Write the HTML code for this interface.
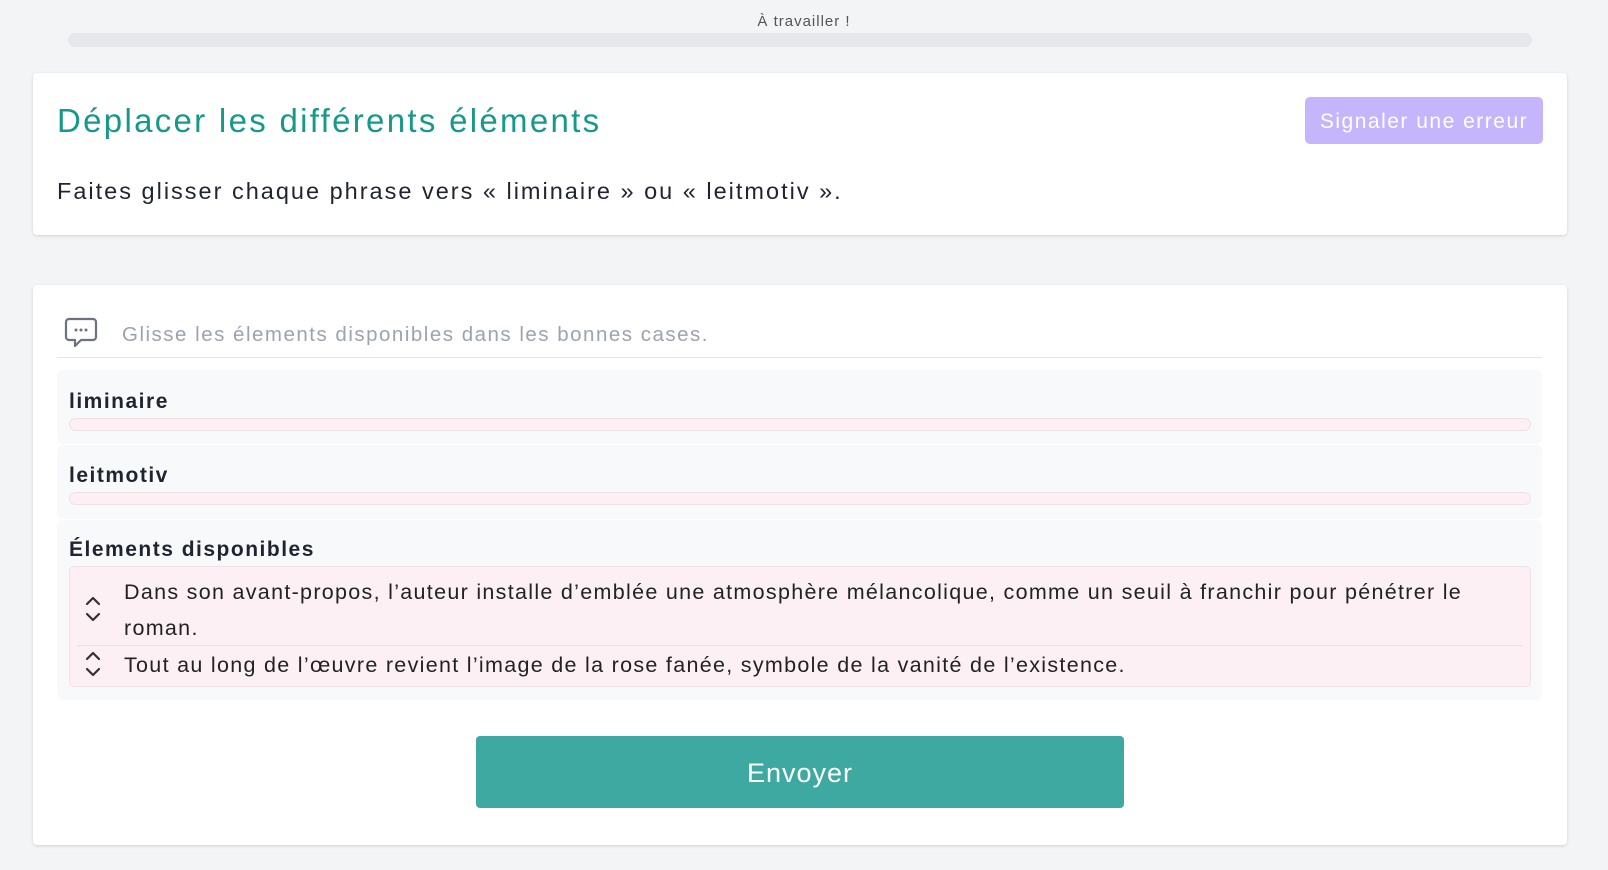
<!DOCTYPE html>
<html><head><meta charset="utf-8"><style>
*{box-sizing:border-box;margin:0;padding:0}
body{width:1608px;height:870px;background:#f3f4f6;font-family:"Liberation Sans",sans-serif;color:#1f2430;position:relative;overflow:hidden}
.a{position:absolute}
.card{background:#fff;border-radius:4px;box-shadow:0 1px 3px rgba(0,0,0,.15)}
.lbl{font-weight:bold;font-size:21px;left:69px;letter-spacing:1.5px}
.bar{left:69px;width:1462px;height:13px;background:#fdf0f5;border:1px solid #f2dfe6;border-radius:7px}
.zone{left:57px;width:1485px;background:#f8f9fa;border-radius:6px}
.txt{font-size:21.5px;color:#222;letter-spacing:1.3px}
</style></head><body>
<div class="a" style="left:0;width:1608px;top:13px;text-align:center;font-size:15px;color:#555;letter-spacing:1px">À travailler !</div>
<div class="a" style="left:68px;top:33px;width:1464px;height:14px;background:#e5e7eb;border-radius:7px"></div>

<div class="a card" style="left:33px;top:73px;width:1534px;height:162px"></div>
<div class="a" style="left:57px;top:102px;font-size:33px;color:#16998a;letter-spacing:2.3px">Déplacer les différents éléments</div>
<div class="a" style="left:1305px;top:97px;width:238px;height:47px;background:#c4b5fd;border-radius:5px;color:#fff;font-size:21px;line-height:49px;text-align:center;letter-spacing:1.5px">Signaler une erreur</div>
<div class="a" style="left:57px;top:178px;font-size:23.5px;color:#1f2430;letter-spacing:2px">Faites glisser chaque phrase vers « liminaire » ou « leitmotiv ».</div>

<div class="a card" style="left:33px;top:285px;width:1534px;height:560px"></div>
<svg class="a" style="left:64px;top:317px" width="34" height="32" viewBox="0 0 34 32"><path d="M5 2h24a3 3 0 0 1 3 3v15a3 3 0 0 1-3 3H17l-6 6v-6H5a3 3 0 0 1-3-3V5a3 3 0 0 1 3-3z" fill="none" stroke="#6b7280" stroke-width="2.2" stroke-linejoin="round"/><circle cx="12" cy="13" r="1.5" fill="#6b7280"/><circle cx="17" cy="13" r="1.5" fill="#6b7280"/><circle cx="22" cy="13" r="1.5" fill="#6b7280"/></svg>
<div class="a" style="left:122px;top:323px;font-size:20.5px;color:#9ca3af;letter-spacing:1.5px">Glisse les élements disponibles dans les bonnes cases.</div>
<div class="a" style="left:57px;top:357px;width:1485px;height:1px;background:#e3e5e8"></div>

<div class="a zone" style="top:370px;height:74px"></div>
<div class="a lbl" style="top:390px">liminaire</div>
<div class="a bar" style="top:418px"></div>
<div class="a zone" style="top:445px;height:74px"></div>
<div class="a lbl" style="top:464px">leitmotiv</div>
<div class="a bar" style="top:492px"></div>
<div class="a zone" style="top:520px;height:180px"></div>
<div class="a lbl" style="top:538px">Élements disponibles</div>
<div class="a" style="left:69px;top:566px;width:1462px;height:121px;background:#fdf0f5;border:1px solid #f0e1e7;border-radius:5px"></div>
<div class="a" style="left:77px;top:645px;width:1446px;height:1px;background:#eedde4"></div>
<svg class="a" style="left:84px;top:596px" width="18" height="26" viewBox="0 0 18 26"><path d="M3 8l6-6 6 6M3 18l6 6 6-6" fill="none" stroke="#333" stroke-width="2.2" stroke-linecap="round" stroke-linejoin="round"/></svg>
<svg class="a" style="left:84px;top:651px" width="18" height="26" viewBox="0 0 18 26"><path d="M3 8l6-6 6 6M3 18l6 6 6-6" fill="none" stroke="#333" stroke-width="2.2" stroke-linecap="round" stroke-linejoin="round"/></svg>
<div class="a txt" style="left:124px;top:574px;width:1370px;line-height:36px">Dans son avant-propos, l’auteur installe d’emblée une atmosphère mélancolique, comme un seuil à franchir pour pénétrer le roman.</div>
<div class="a txt" style="left:124px;top:653px">Tout au long de l’œuvre revient l’image de la rose fanée, symbole de la vanité de l’existence.</div>

<div class="a" style="left:476px;top:736px;width:648px;height:72px;background:#3ea9a0;border-radius:4px;color:#fff;font-size:27px;line-height:74px;text-align:center;letter-spacing:1px">Envoyer</div>
</body></html>
